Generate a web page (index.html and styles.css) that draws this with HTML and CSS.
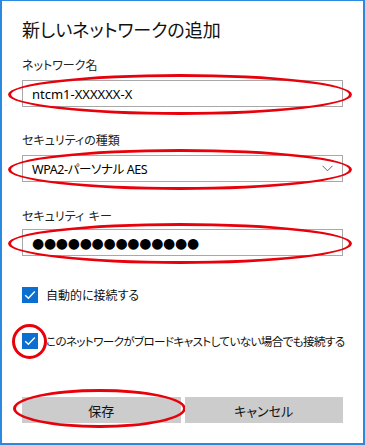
FILE: index.html
```html
<!DOCTYPE html>
<html lang="ja">
<head>
<meta charset="utf-8">
<link rel="stylesheet" href="styles.css">
</head>
<body>
<div class="dialog">
  <h1 class="title">新しいネットワークの追加</h1>

  <div class="field f1">
    <div class="label">ネットワーク名</div>
    <div class="box"><span class="val">ntcm1-XXXXXX-X</span></div>
    <div class="ring ring-input"></div>
  </div>

  <div class="field f2">
    <div class="label">セキュリティの種類</div>
    <div class="box select"><span class="val">WPA2-パーソナル AES</span>
      <svg class="chev" width="11" height="7" viewBox="0 0 11 7"><path d="M0.5 0.8 L5.5 5.8 L10.5 0.8" fill="none" stroke="#666" stroke-width="1"/></svg>
    </div>
    <div class="ring ring-input"></div>
  </div>

  <div class="field f3">
    <div class="label">セキュリティ <span class="gap"></span>キー</div>
    <div class="box"><span class="dots">●●●●●●●●●●●●●●</span></div>
    <div class="ring ring-input"></div>
  </div>

  <div class="check c1">
    <span class="cb"><svg width="16" height="16" viewBox="0 0 16 16"><path d="M3.2 8.2 L6.4 11.3 L12.8 4.6" fill="none" stroke="#fff" stroke-width="1.4"/></svg></span>
    <span class="ctext">自動的に接続する</span>
  </div>

  <div class="check c2">
    <span class="cb"><svg width="16" height="16" viewBox="0 0 16 16"><path d="M3.2 8.2 L6.4 11.3 L12.8 4.6" fill="none" stroke="#fff" stroke-width="1.4"/></svg></span>
    <span class="ctext">このネットワークがブロードキャストしていない場合でも接続する</span>
    <div class="ring ring-check"></div>
  </div>

  <div class="buttons">
    <div class="btn save">保存<div class="ring ring-btn"></div></div>
    <div class="btn">キャンセル</div>
  </div>
</div>
</body>
</html>
```

FILE: styles.css
```css
html, body {
  margin: 0;
  padding: 0;
  background: #fff;
}
body {
  font-family: "Noto Sans CJK JP", "Noto Sans", sans-serif;
  font-feature-settings: "palt";
  color: #000;
}
.dialog {
  box-sizing: border-box;
  width: 365px;
  height: 445px;
  border-top: 1px solid #2b8ae0;
  border-left: 2px solid #2b8ae0;
  border-right: 2px solid #2b8ae0;
  border-bottom: 2px solid #2b8ae0;
  padding: 16px 20px 0 20px;
  display: flex;
  flex-direction: column;
}
.title {
  margin: 0;
  font-size: 18px;
  font-weight: normal;
  line-height: 24px;
  color: #111;
}
.field {
  position: relative;
}
.f1 { margin-top: 15px; }
.f2 { margin-top: 24px; }
.f3 { margin-top: 25px; }
.label {
  font-size: 12px;
  line-height: 18px;
  color: #222;
}
.gap {
  display: inline-block;
  width: 2px;
}
.f1 .box { margin-top: 6px; }
.f2 .box { margin-top: 6px; }
.f3 .box { margin-top: 4px; }
.box {
  box-sizing: border-box;
  height: 27px;
  border: 1px solid #a8a8a8;
  display: flex;
  align-items: center;
  padding-left: 9px;
  padding-right: 9px;
}
.val {
  font-family: "Noto Sans", sans-serif;
  font-size: 13px;
  color: #000;
}
.select .val {
  font-family: "Noto Sans", "Noto Sans CJK JP", sans-serif;
  font-size: 12.5px;
  letter-spacing: -0.4px;
  flex: 1;
}
.chev { display: block; }
.dots {
  font-family: "DejaVu Sans", sans-serif;
  font-size: 14px;
  letter-spacing: -0.3px;
  color: #000;
}
.ring {
  position: absolute;
  box-sizing: border-box;
  border: 3px solid #e8000b;
  border-radius: 50%;
  pointer-events: none;
}
.ring-input {
  left: -14px;
  right: -9px;
  bottom: -8px;
  height: 41px;
}
.check {
  position: relative;
  display: flex;
  align-items: center;
  gap: 8px;
  height: 16px;
}
.c1 { margin-top: 31px; }
.c2 { margin-top: 30px; }
.cb {
  width: 16px;
  height: 16px;
  background: #0a6fd1;
  display: block;
  flex: none;
}
.cb svg { display: block; }
.ctext {
  font-size: 12px;
  line-height: 18px;
  color: #111;
  white-space: nowrap;
}
.c2 .ctext {
  font-size: 11.6px;
  letter-spacing: -0.65px;
}
.ring-check {
  left: -10px;
  top: -9px;
  width: 35px;
  height: 35px;
}
.buttons {
  margin-top: 48px;
  display: flex;
  gap: 4px;
}
.btn {
  position: relative;
  flex: 1;
  height: 26px;
  background: #cccccc;
  display: flex;
  align-items: center;
  justify-content: center;
  font-size: 13px;
  color: #111;
}
.ring-btn {
  left: -9px;
  right: -5px;
  top: -8px;
  bottom: -5px;
}
```
